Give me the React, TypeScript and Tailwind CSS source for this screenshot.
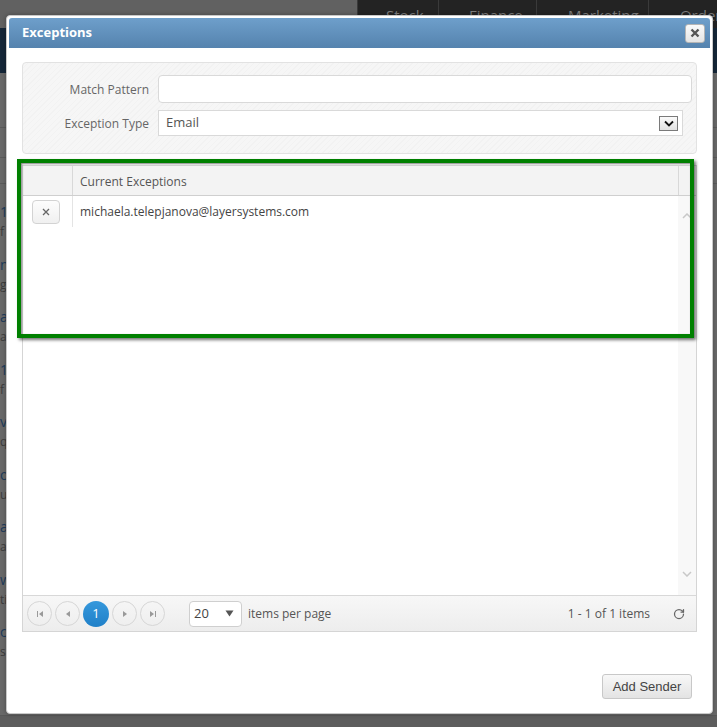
import { RotateCw } from 'lucide-react'

const stripItems = [
  ['1', 'f'],
  ['n', 'g'],
  ['ar', 'a'],
  ['1', 'f'],
  ['vo', 'qu'],
  ['o', 'u'],
  ['ar', 'a'],
  ['w', 'ti'],
  ['ce', 'si'],
]

function PageBehind() {
  return (
    <div className="flex h-full flex-col bg-[#686868] font-['Open_Sans',sans-serif]">
      <div className="flex h-[28px] shrink-0">
        <div className="w-[357px] shrink-0 bg-[#616161]" />
        <div className="flex min-w-0 flex-1 overflow-hidden bg-[#232323] text-[15px] text-[#7c7c7c]">
          <div className="w-[81px] shrink-0 border-l border-[#3a3a3a] pt-[4px] pl-[13px] whitespace-nowrap">
            <span className="mr-[6px] text-[9px]">▼</span>Stock
          </div>
          <div className="w-[98px] shrink-0 border-l border-[#3a3a3a] pt-[4px] pl-[15px] whitespace-nowrap">
            <span className="mr-[6px] text-[9px]">▼</span>Finance
          </div>
          <div className="w-[112px] shrink-0 border-l border-[#3a3a3a] pt-[4px] pl-[16px] whitespace-nowrap">
            <span className="mr-[6px] text-[9px]">▼</span>Marketing
          </div>
          <div className="shrink-0 border-l border-[#3a3a3a] pt-[4px] pl-[16px] whitespace-nowrap">
            <span className="mr-[6px] text-[9px]">▼</span>Orders
          </div>
        </div>
      </div>
      <div className="h-[45px] shrink-0 bg-[#142638]" />
      <div className="h-[55px] shrink-0 border-b border-[#5a5a5a]" />
      <div className="h-[30px] shrink-0 border-b border-[#5a5a5a]" />
      <div className="h-[26px] shrink-0 border-b border-[#5a5a5a]" />
      <div className="flex flex-col pt-[18px]">
        {stripItems.map(([title, sub], i) => (
          <div key={i} className="flex h-[52.5px] flex-col">
            <span className="text-[14px] leading-[20px] text-[#1d3b5a]">{title}</span>
            <span className="text-[12px] leading-[20px] text-[#3c3c3c]">{sub}</span>
          </div>
        ))}
      </div>
      <div className="mt-auto h-[12px] border-t border-[#575757] bg-[#5d5d5d]" />
    </div>
  )
}

function PagerCircle({ children }: { children: React.ReactNode }) {
  return (
    <div className="flex h-[25px] w-[25px] items-center justify-center rounded-full border border-[#d6d6d6] text-[#9a9a9a]">
      {children}
    </div>
  )
}

export default function App() {
  return (
    <div className="relative h-[727px] w-[717px] overflow-hidden bg-[#5e5e5e]">
      <PageBehind />

      <div className="absolute top-[15px] left-[6px] flex h-[699px] w-[707px] flex-col rounded-[4px] border border-[#c9c9c9] bg-white p-[2px] font-['Open_Sans',sans-serif] shadow-[0_0_4px_rgba(0,0,0,0.3)]">
        <div className="flex h-[30px] shrink-0 items-center justify-between rounded-t-[3px] bg-gradient-to-b from-[#6e9fcb] to-[#5583ae] pr-[5px] pl-[13px]">
          <span className="text-[13px] font-bold text-white">Exceptions</span>
          <button
            type="button"
            className="flex h-[19px] w-[20px] items-center justify-center rounded-[3px] border border-[#b5b5b5] bg-gradient-to-b from-[#fafafa] to-[#e4e4e4] text-[#555]"
            aria-label="Close"
          >
            <svg width="10" height="10" viewBox="0 0 10 10">
              <path d="M1.5 1.5 L8.5 8.5 M8.5 1.5 L1.5 8.5" stroke="#555" strokeWidth="2.4" />
            </svg>
          </button>
        </div>

        <div className="flex flex-1 flex-col px-[13px] pt-[14px] pb-[12px]">
          <div className="flex h-[92px] shrink-0 flex-col gap-[7px] rounded-[4px] border border-[#e2e2e2] bg-[repeating-linear-gradient(135deg,#f6f6f6_0px,#f6f6f6_3px,#f2f2f2_3px,#f2f2f2_4px)] pt-[12px] text-[12px] text-[#666]">
            <div className="flex items-center">
              <label className="w-[135px] pt-[2px] pr-[9px] text-right">Match Pattern</label>
              <div className="h-[28px] w-[534px] rounded-[4px] border border-[#d9d9d9] bg-white" />
            </div>
            <div className="flex items-center">
              <label className="w-[135px] pt-[2px] pr-[9px] text-right">Exception Type</label>
              <div className="flex h-[26px] w-[525px] items-center justify-between border border-[#d9d9d9] bg-white pr-[4px] pl-[7px] text-[13px] text-[#555]">
                <span>Email</span>
                <div className="flex h-[15px] w-[19px] items-center justify-center border border-[#7a7a7a] bg-gradient-to-b from-[#fafafa] to-[#e2e2e2]">
                  <svg width="10" height="7" viewBox="0 0 10 7">
                    <path d="M1 1.5 L5 5.5 L9 1.5" fill="none" stroke="#111" strokeWidth="1.8" />
                  </svg>
                </div>
              </div>
            </div>
          </div>

          <div className="mt-[11px] flex h-[467px] shrink-0 flex-col border border-[#d5d5d5] text-[12px]">
            <div className="flex h-[30px] shrink-0 border-b border-[#cfcfcf] bg-[#f3f3f3] text-[#555]">
              <div className="w-[50px] border-r border-[#d8d8d8]" />
              <div className="flex flex-1 items-center pt-[2px] pl-[7px]">Current Exceptions</div>
              <div className="w-[18px] border-l border-[#d8d8d8]" />
            </div>

            <div className="flex flex-1">
              <div className="flex-1">
                <div className="flex h-[31px]">
                  <div className="w-[50px] border-r border-[#e4e4e4] pt-[4px] pl-[9px]">
                    <div className="flex h-[24px] w-[28px] items-center justify-center rounded-[4px] border border-[#d3d3d3] bg-gradient-to-b from-[#fdfdfd] to-[#f0f0f0]">
                      <svg width="8" height="8" viewBox="0 0 8 8">
                        <path d="M1 1 L7 7 M7 1 L1 7" stroke="#666" strokeWidth="1.3" />
                      </svg>
                    </div>
                  </div>
                  <div className="flex flex-1 items-center pl-[7px] text-[#444]">
                    michaela.telepjanova@layersystems.com
                  </div>
                </div>
              </div>
              <div className="flex w-[18px] flex-col items-center justify-between bg-[#f8f8f8] pt-[17px] pb-[18px]">
                <svg width="10" height="6" viewBox="0 0 10 6">
                  <path d="M1 5 L5 1 L9 5" fill="none" stroke="#c8c8c8" strokeWidth="1.5" />
                </svg>
                <svg width="10" height="6" viewBox="0 0 10 6">
                  <path d="M1 1 L5 5 L9 1" fill="none" stroke="#c8c8c8" strokeWidth="1.5" />
                </svg>
              </div>
            </div>

            <div className="flex h-[36px] shrink-0 items-center border-t border-[#d8d8d8] bg-gradient-to-b from-[#f7f7f7] to-[#ededed] pr-[11px] pl-[4px] text-[12px] text-[#555]">
              <div className="flex items-center gap-[3px]">
                <PagerCircle>
                  <svg width="8" height="8" viewBox="0 0 8 8">
                    <path d="M1 1 H2 V7 H1 Z M7 1 L3 4 L7 7 Z" fill="#999" />
                  </svg>
                </PagerCircle>
                <PagerCircle>
                  <svg width="8" height="8" viewBox="0 0 8 8">
                    <path d="M6 1 L2 4 L6 7 Z" fill="#999" />
                  </svg>
                </PagerCircle>
                <div className="flex h-[26px] w-[26px] items-center justify-center rounded-full bg-gradient-to-b from-[#3598dc] to-[#2080c8] text-[13px] text-white">
                  1
                </div>
                <PagerCircle>
                  <svg width="8" height="8" viewBox="0 0 8 8">
                    <path d="M2 1 L6 4 L2 7 Z" fill="#999" />
                  </svg>
                </PagerCircle>
                <PagerCircle>
                  <svg width="8" height="8" viewBox="0 0 8 8">
                    <path d="M1 1 L5 4 L1 7 Z M6 1 H7 V7 H6 Z" fill="#999" />
                  </svg>
                </PagerCircle>
              </div>
              <div className="ml-[24px] flex h-[26px] w-[53px] items-center justify-between rounded-[4px] border border-[#cfcfcf] bg-white pr-[7px] pl-[4px] text-[13px] text-[#444]">
                <span>20</span>
                <svg width="9" height="7" viewBox="0 0 9 7">
                  <path d="M0.5 0.5 H8.5 L4.5 6.5 Z" fill="#555" />
                </svg>
              </div>
              <span className="ml-[6px] text-[12px]">items per page</span>
              <span className="ml-auto">1 - 1 of 1 items</span>
              <RotateCw className="ml-[23px] h-[12px] w-[12px] text-[#666]" strokeWidth={2.5} />
            </div>
          </div>

          <div className="mt-auto flex justify-end pr-[5px]">
            <button
              type="button"
              className="h-[25px] w-[90px] rounded-[3px] border border-[#c8c8c8] bg-gradient-to-b from-[#f8f8f8] to-[#e3e3e3] font-['Liberation_Sans',Arial,sans-serif] text-[13px] text-[#444]"
            >
              Add Sender
            </button>
          </div>
        </div>
      </div>

      <div className="pointer-events-none absolute top-[159px] left-[17px] h-[179px] w-[677px] border-[4px] border-[#008000] shadow-[inset_1px_1px_2px_rgba(0,0,0,0.5),2px_2px_3px_rgba(0,0,0,0.55)]" />
    </div>
  )
}
